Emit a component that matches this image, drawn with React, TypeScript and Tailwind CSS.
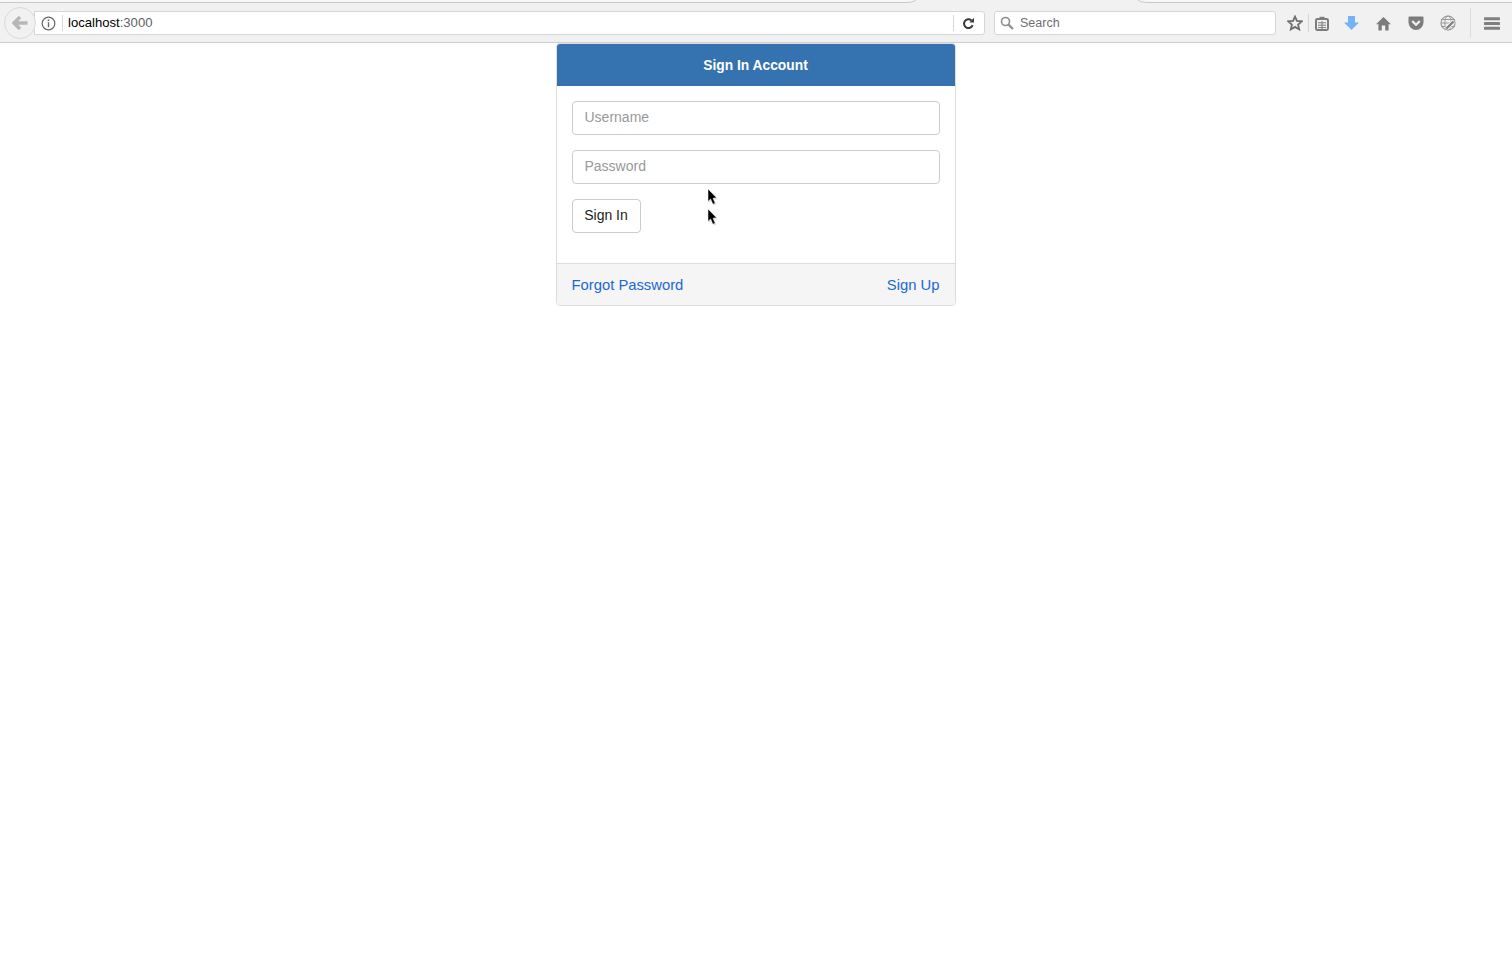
import React from 'react';

const font = "font-['Liberation_Sans',Arial,sans-serif]";

const Cursor: React.FC<{ className: string }> = ({ className }) => (
  <svg className={className} width="12" height="19" viewBox="0 0 12 19">
    <path d="M2 2 L2 15 L4.6 12.6 L6.8 17.6 L9.4 16.4 L7.3 11.6 L10.8 11.2 Z" fill="#c8c8c8" opacity="0.6" />
    <path d="M1 1 L1 13.4 L3.6 11 L5.9 16.2 L8.2 15.2 L6 10.2 L9.6 9.8 Z" fill="#000" stroke="#fff" strokeWidth="0.5" />
  </svg>
);

const Toolbar: React.FC = () => (
  <div className="h-[43px] pt-[4px] bg-[#f1f1f1] border-b border-[#cfcfcf] flex items-center relative shrink-0">
    {/* tab strip edge, the active tab sits between the two curves */}
    <div className="absolute left-0 top-0 w-[905px] h-[3px] border-b border-[#c8c8c8] bg-[#f7f7f7]" />
    <svg className="absolute left-[905px] top-0" width="12" height="3" viewBox="0 0 12 3">
      <path d="M0 0 H11 Q8 2.5 0 2.5 Z" fill="#f7f7f7" />
      <path d="M0 2.5 Q8 2.5 11 0" fill="none" stroke="#c8c8c8" />
    </svg>
    <svg className="absolute left-[1137px] top-0" width="12" height="3" viewBox="0 0 12 3">
      <path d="M1 0 H12 V2.5 Q4 2.5 1 0 Z" fill="#f7f7f7" />
      <path d="M1 0 Q4 2.5 12 2.5" fill="none" stroke="#c8c8c8" />
    </svg>
    <div className="absolute left-[1149px] right-0 top-0 h-[3px] border-b border-[#c8c8c8] bg-[#f7f7f7]" />

    <div className="relative ml-[4px] w-[32px] h-[32px] rounded-full border border-[#dadada] bg-[#f1f1f1] flex items-center justify-center z-10">
      <svg width="16" height="14" viewBox="0 0 16 14">
        <path d="M8 1 L2 7 L8 13 M2.5 7 H15.5" fill="none" stroke="#b6b6b6" strokeWidth="3.4" />
      </svg>
    </div>
    <div className="-ml-[2px] w-[951px] h-[24px] bg-white border border-[#d6d6d6] rounded-r-[3px] flex items-center">
      <svg className="ml-[6px]" width="15" height="15" viewBox="0 0 15 15">
        <circle cx="7.5" cy="7.5" r="6.3" fill="none" stroke="#666666" strokeWidth="1.2" />
        <rect x="6.7" y="3.5" width="1.6" height="1.6" fill="#666666" />
        <rect x="6.8" y="6.2" width="1.4" height="5" fill="#666666" />
      </svg>
      <div className="ml-[6px] w-px h-[16px] bg-[#d8d8d8]" />
      <span className="ml-[5px] text-[13.1px] text-black">localhost<span className="text-[#5f5f5f]">:3000</span></span>
      <div className="ml-auto w-px h-[16px] bg-[#d8d8d8]" />
      <div className="w-[30px] pr-[2px] flex justify-center">
        <svg width="13" height="13" viewBox="0 0 13 13">
          <path d="M10.6 8.2 A4.4 4.4 0 1 1 9.4 3.4" fill="none" stroke="#3a3a3a" strokeWidth="2" />
          <path d="M7.4 5.4 L12 5.4 L12 0.8 Z" fill="#3a3a3a" />
        </svg>
      </div>
    </div>
    <div className="ml-[9px] w-[282px] h-[24px] bg-white border border-[#d6d6d6] rounded-[3px] flex items-center">
      <svg className="ml-[5px]" width="14" height="14" viewBox="0 0 14 14">
        <circle cx="5.5" cy="5.5" r="4" fill="none" stroke="#8c8c8c" strokeWidth="1.6" />
        <path d="M8.5 8.5 L13 13" stroke="#8c8c8c" strokeWidth="2.2" />
      </svg>
      <span className="ml-[6px] text-[12.5px] text-[#6f6f6f]">Search</span>
    </div>
    <div className="ml-[11px] flex items-center">
      <svg width="16" height="16" viewBox="0 0 16 16">
        <path d="M8 1.6 L9.9 5.9 L14.8 6.4 L11.1 9.6 L12.2 14.4 L8 11.9 L3.8 14.4 L4.9 9.6 L1.2 6.4 L6.1 5.9 Z" fill="none" stroke="#6e6e6e" strokeWidth="1.8" />
      </svg>
      <div className="ml-[5px] w-px h-[18px] bg-[#d4d4d4]" />
      <svg className="ml-[6px]" width="14" height="15" viewBox="0 0 14 15">
        <rect x="1" y="3" width="12" height="11" rx="1.4" fill="none" stroke="#7c7c7c" strokeWidth="2" />
        <rect x="4.5" y="0.8" width="5" height="3" fill="#7c7c7c" />
        <path d="M3 6.8 H11 M3 9.2 H11 M3 11.6 H11 M7 5 V13" stroke="#7c7c7c" strokeWidth="1" />
      </svg>
      <svg className="ml-[15px]" width="15" height="16" viewBox="0 0 15 16">
        <path d="M4 1 H11 V7.5 H15 L7.5 15 L0 7.5 H4 Z" fill="#74b3f5" />
      </svg>
      <svg className="ml-[17px]" width="15" height="15" viewBox="0 0 15 15">
        <path d="M7.5 1 L15 8.2 L12.6 8.2 L12.6 14.5 L9.2 14.5 L9.2 9.6 L5.8 9.6 L5.8 14.5 L2.4 14.5 L2.4 8.2 L0 8.2 Z" fill="#7c7c7c" />
      </svg>
      <svg className="ml-[17px]" width="16" height="15" viewBox="0 0 16 15">
        <path d="M1.5 0.5 H14.5 Q15.5 0.5 15.5 1.5 V6.5 A7.5 7.5 0 0 1 0.5 6.5 V1.5 Q0.5 0.5 1.5 0.5 Z" fill="#7c7c7c" />
        <path d="M4.2 5 L8 8.8 L11.8 5" fill="none" stroke="#f1f1f1" strokeWidth="2.2" />
      </svg>
      <svg className="ml-[16px]" width="16" height="16" viewBox="0 0 16 16">
        <circle cx="8" cy="8" r="7" fill="none" stroke="#9a9a9a" strokeWidth="1.2" />
        <ellipse cx="8" cy="8" rx="3.2" ry="7" fill="none" stroke="#9a9a9a" strokeWidth="1" />
        <path d="M1 4.5 H15 M1 8 H15 M1 11.5 H15" stroke="#9a9a9a" strokeWidth="1" />
        <path d="M6.5 13.5 L13.5 6.5" stroke="#f1f1f1" strokeWidth="4" />
        <path d="M6.5 13.5 L13.5 6.5" stroke="#7c7c7c" strokeWidth="2.2" />
      </svg>
      <div className="ml-[14px] w-px h-[30px] bg-[#dcdcdc]" />
      <svg className="ml-[13px]" width="16" height="13" viewBox="0 0 16 13">
        <rect y="0.2" width="16" height="3" rx="0.6" fill="#808080" />
        <rect y="5" width="16" height="3" rx="0.6" fill="#808080" />
        <rect y="9.8" width="16" height="3" rx="0.6" fill="#808080" />
      </svg>
    </div>
  </div>
);

const App: React.FC = () => {
  return (
    <div className={`w-[1512px] h-[956px] bg-white flex flex-col overflow-hidden relative ${font}`}>
      <Toolbar />
      <div className="flex justify-center">
        <div className="w-[400px] ml-[-1px] border border-[#dddddd] rounded-[4px] bg-white overflow-hidden">
          <div className="h-[42px] pt-[2px] bg-[#3572b0] text-white text-[13.8px] font-bold flex items-center justify-center">
            Sign In Account
          </div>
          <div className="px-[15px] pt-[15px] pb-[30px] flex flex-col">
            <input
              placeholder="Username"
              className="h-[34px] w-full rounded-[4px] border border-[#cccccc] px-[12px] pb-[2px] text-[14px] placeholder:text-[#999999] mb-[15px]"
            />
            <input
              placeholder="Password"
              className="h-[34px] w-full rounded-[4px] border border-[#cccccc] px-[12px] pb-[2px] text-[14px] placeholder:text-[#999999] mb-[15px]"
            />
            <button className="h-[34px] w-[69px] pb-[2px] rounded-[4px] border border-[#cccccc] bg-white text-[14px] text-[#222222]">
              Sign In
            </button>
          </div>
          <div className="h-[42px] pt-[2px] bg-[#f5f5f5] border-t border-[#dddddd] px-[15px] flex items-center justify-between text-[14.8px] text-[#1a68d6]">
            <a>Forgot Password</a>
            <a>Sign Up</a>
          </div>
        </div>
      </div>
      <Cursor className="absolute left-[707px] top-[188px]" />
      <Cursor className="absolute left-[707px] top-[208px]" />
    </div>
  );
};

export default App;
